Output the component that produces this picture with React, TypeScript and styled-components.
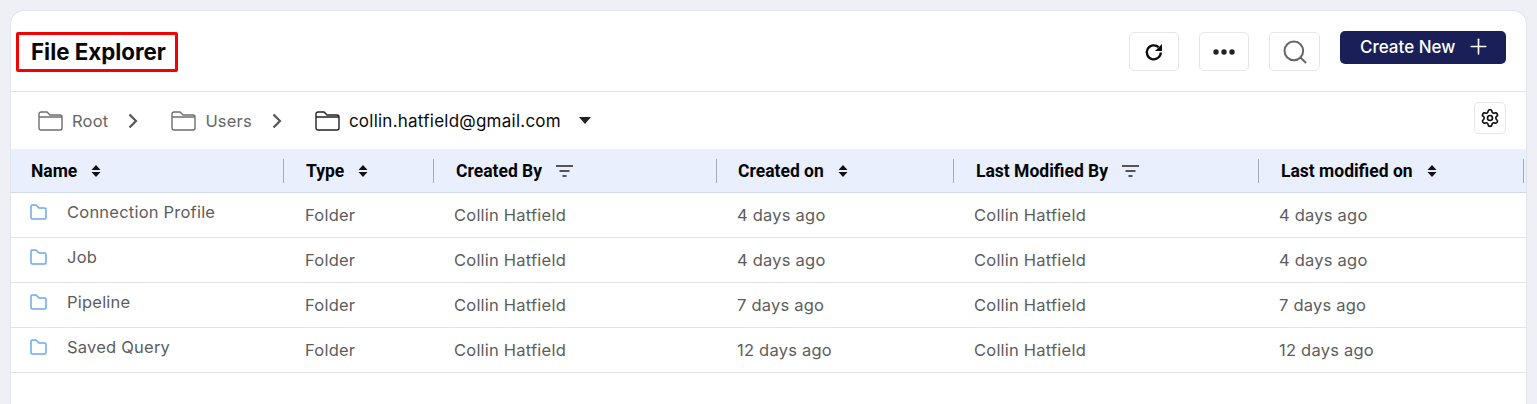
import React from "react";
import styled, { createGlobalStyle } from "styled-components";
import { Plus, Search, Settings } from "lucide-react";

const Global = createGlobalStyle`
  html, body { margin: 0; padding: 0; background: #eff0f6; overflow: hidden; }
  body { font-family: Inter, "Open Sans", sans-serif; }
`;

const Page = styled.div`
  height: 404px;
  padding: 10px 10px 0 10px;
  box-sizing: border-box;
`;
const Card = styled.div`
  height: 394px;
  background: #fff;
  border: 1px solid #e3e4e9;
  border-bottom: 0;
  border-radius: 14px 14px 0 0;
  box-sizing: border-box;
  overflow: hidden;
`;
const TopBar = styled.div`
  height: 81px;
  box-sizing: border-box;
  border-bottom: 1px solid #e2e3e8;
  display: flex;
  align-items: flex-start;
  padding: 20px 20px 0 5px;
`;
const TitleBox = styled.div`
  width: 162px;
  height: 40px;
  margin-top: 1px;
  box-sizing: border-box;
  border: 3px solid #f40000;
  border-radius: 2px;
  padding: 0 0 2px 12px;
  display: flex;
  align-items: center;
`;
const Title = styled.h1`
  margin: 0;
  font-size: 22.3px;
  font-weight: 700;
  color: #060606;
  white-space: nowrap;
`;
const TopActions = styled.div`
  margin-left: auto;
  display: flex;
  align-items: flex-start;
  gap: 20px;
`;
const IconButton = styled.button<{ $w?: number }>`
  width: ${(p) => p.$w ?? 50}px;
  height: 39px;
  margin-top: 1px;
  padding: 0;
  background: #fff;
  border: 1px solid #e5e6ea;
  border-radius: 5px;
  display: flex;
  align-items: center;
  justify-content: center;
`;
const CreateButton = styled.button`
  width: 166px;
  height: 33px;
  padding: 0 0 2px 20px;
  border: 0;
  border-radius: 5px;
  background: #1b1f58;
  color: #fff;
  font: 500 17px Inter, sans-serif;
  display: flex;
  align-items: center;
  gap: 11px;
`;
const CrumbBar = styled.div`
  height: 57px;
  box-sizing: border-box;
  display: flex;
  align-items: flex-start;
  padding: 0 20px 0 27px;
`;
const Crumb = styled.div<{ $active?: boolean }>`
  height: 57px;
  display: flex;
  align-items: center;
  gap: ${(p) => (p.$active ? 9 : 9)}px;
  font-size: ${(p) => (p.$active ? 17 : 16.5)}px;
  letter-spacing: ${(p) => (p.$active ? 0.24 : 0.2)}px;
  color: ${(p) => (p.$active ? "#0a0a0a" : "#666")};
  font-weight: 400;
`;
const Separator = styled.span`
  display: flex;
  height: 57px;
  align-items: center;
  margin: 0 33px 0 20px;
`;
const Caret = styled.span`
  width: 0;
  height: 0;
  margin-left: 9px;
  border-left: 6.5px solid transparent;
  border-right: 6.5px solid transparent;
  border-top: 7px solid #222;
`;
const SmallButton = styled.button`
  margin: 10px 0 0 auto;
  width: 32px;
  height: 32px;
  padding: 0;
  background: #fff;
  border: 1px solid #e5e6ea;
  border-radius: 5px;
  display: flex;
  align-items: center;
  justify-content: center;
`;
const columns = "273px 150px 283px 237px 305px 265px 1fr";
const HeaderRow = styled.div`
  height: 44px;
  box-sizing: border-box;
  background: #e9effc;
  border-bottom: 1px solid #d3d9e6;
  display: grid;
  grid-template-columns: ${columns};
  align-items: center;
`;
const HeaderCell = styled.div<{ $pad: number }>`
  height: 24px;
  box-sizing: border-box;
  border-right: 1px solid #a9abb2;
  padding-left: ${(p) => p.$pad}px;
  display: flex;
  align-items: center;
  gap: 14px;
  font: 700 17.5px Roboto, sans-serif;
  color: #050505;
  white-space: nowrap;
`;
const Row = styled.div`
  height: 45px;
  box-sizing: border-box;
  border-bottom: 1px solid #e2e3e7;
  display: grid;
  grid-template-columns: ${columns};
  align-items: center;
  font-size: 16.5px;
  letter-spacing: 0.22px;
  color: #5d5d5d;
`;
const NameCell = styled.div`
  display: flex;
  align-items: center;
  gap: 20px;
  padding: 0 0 6px 19px;
  white-space: nowrap;
`;
const Cell = styled.div<{ $pad: number }>`
  padding-left: ${(p) => p.$pad}px;
  white-space: nowrap;
`;

const Sort = () => (
  <svg width="10" height="14" viewBox="0 0 10 14" fill="#111">
    <path d="M5 1 9.500 6H.5zM.5 8h9L5 13z" />
  </svg>
);
const Filter = () => (
  <svg width="17" height="12" viewBox="0 0 17 12" stroke="#222" strokeWidth="1.6">
    <path d="M0 1h17M3.500 6h10M6.500 11h4" />
  </svg>
);
const Chevron = () => (
  <svg width="10" height="16" viewBox="0 0 10 16" fill="none" stroke="#555" strokeWidth="2.200">
    <path d="M1.500 1.500 8 8l-6.500 6.500" />
  </svg>
);
const Refresh = () => (
  <svg width="20" height="20" viewBox="0 0 20 20" fill="none">
    <path d="M16.800 10.500a7 7 0 1 1-2.200-5.300" stroke="#0c0c0c" strokeWidth="2.300" />
    <path d="M18 2v7h-7z" fill="#0c0c0c" />
  </svg>
);
const CrumbFolder = ({ color }: { color: string }) => (
  <svg width="25" height="20" viewBox="0 0 25 20" fill="none" stroke={color} strokeWidth="1.400">
    <path d="M1 17V3a2 2 0 0 1 2-2h6l3 3h10a2 2 0 0 1 2 2v11a2 2 0 0 1-2 2H3a2 2 0 0 1-2-2zM1 6h23" />
  </svg>
);
const RowFolder = () => (
  <svg width="17" height="16" viewBox="0 0 17 16" fill="none" stroke="#6aa9ea" strokeWidth="1.500">
    <path d="M1 13.500V2.500a1.500 1.500 0 0 1 1.500-1.500h3.500l3 3h5.500a1.500 1.500 0 0 1 1.500 1.500v8a1.500 1.500 0 0 1-1.500 1.500h-12a1.500 1.500 0 0 1-1.500-1.500z" />
  </svg>
);
const Dots = () => (
  <svg width="22" height="6" viewBox="0 0 22 6" fill="#222">
    <circle cx="3" cy="3" r="2.700" />
    <circle cx="11" cy="3" r="2.700" />
    <circle cx="19" cy="3" r="2.700" />
  </svg>
);

const data = [
  ["Connection Profile", "4 days ago"],
  ["Job", "4 days ago"],
  ["Pipeline", "7 days ago"],
  ["Saved Query", "12 days ago"],
];

export default function App() {
  return (
    <Page>
      <Global />
      <Card>
        <TopBar>
          <TitleBox>
            <Title>File Explorer</Title>
          </TitleBox>
          <TopActions>
            <IconButton aria-label="Refresh">
              <Refresh />
            </IconButton>
            <IconButton aria-label="More">
              <Dots />
            </IconButton>
            <IconButton $w={51} aria-label="Search">
              <Search size={28} color="#666" strokeWidth={1.7} />
            </IconButton>
            <CreateButton>
              Create New <Plus size={25} strokeWidth={1.6} />
            </CreateButton>
          </TopActions>
        </TopBar>
        <CrumbBar>
          <Crumb>
            <CrumbFolder color="#6e6e6e" />
            Root
          </Crumb>
          <Separator>
            <Chevron />
          </Separator>
          <Crumb>
            <CrumbFolder color="#6e6e6e" />
            Users
          </Crumb>
          <Separator>
            <Chevron />
          </Separator>
          <Crumb $active>
            <CrumbFolder color="#222" />
            collin.hatfield@gmail.com
            <Caret />
          </Crumb>
          <SmallButton aria-label="Settings">
            <Settings size={20} color="#111" strokeWidth={2} />
          </SmallButton>
        </CrumbBar>
        <HeaderRow>
          <HeaderCell $pad={20}>Name <Sort /></HeaderCell>
          <HeaderCell $pad={22}>Type <Sort /></HeaderCell>
          <HeaderCell $pad={22}>Created By <Filter /></HeaderCell>
          <HeaderCell $pad={21}>Created on <Sort /></HeaderCell>
          <HeaderCell $pad={22}>Last Modified By <Filter /></HeaderCell>
          <HeaderCell $pad={22}>Last modified on <Sort /></HeaderCell>
        </HeaderRow>
        {data.map(([name, age]) => (
          <Row key={name}>
            <NameCell><RowFolder />{name}</NameCell>
            <Cell $pad={21}>Folder</Cell>
            <Cell $pad={20}>Collin Hatfield</Cell>
            <Cell $pad={20}>{age}</Cell>
            <Cell $pad={20}>Collin Hatfield</Cell>
            <Cell $pad={20}>{age}</Cell>
          </Row>
        ))}
      </Card>
    </Page>
  );
}
